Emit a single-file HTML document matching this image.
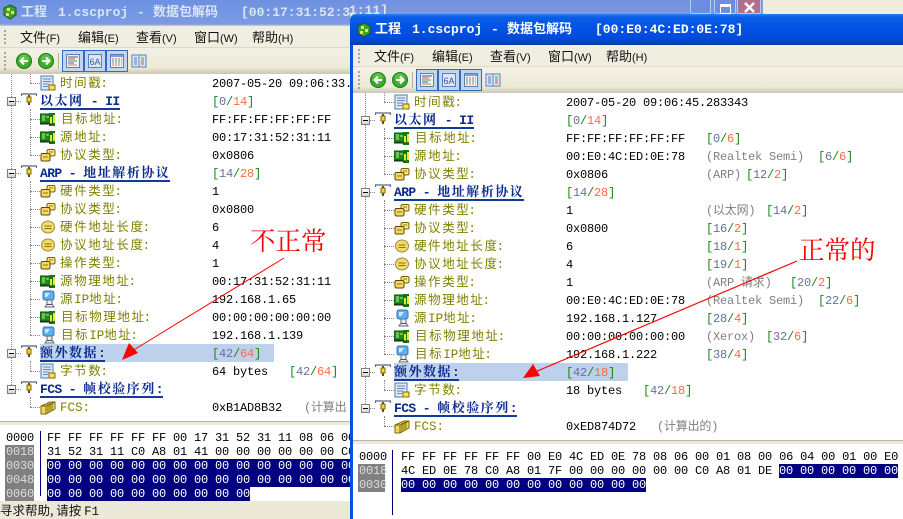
<!DOCTYPE html>
<html><head><meta charset="utf-8"><style>
html,body{margin:0;padding:0;width:903px;height:519px;overflow:hidden;background:#efecdb}
*{box-sizing:border-box}
.win{position:absolute;overflow:hidden;background:#fff}
.in{position:absolute}
.abs,.r,.r>*{position:absolute}
.title{left:-10px;width:1000px;height:26px;top:0}
.tt{position:absolute;top:4px;white-space:pre;font:bold 13px/18px "Liberation Mono","Noto Sans CJK SC",monospace}
.menu{left:-10px;width:1000px;height:22px;top:26px;background:#f0eee0;border-bottom:1px solid #ddd9c5}
.tb{left:-10px;width:1000px;height:26px;top:48px;background:linear-gradient(#f3f1e6,#ece9d8 20px,#cfcbb8 25px)}
.m{position:absolute;top:27px;font:13px/20px "Noto Sans CJK SC",sans-serif;color:#111;white-space:pre}
.m i{font:11px/20px "Liberation Sans",sans-serif;font-style:normal}
.grip{position:absolute;left:4px;width:2px;background:repeating-linear-gradient(#a9a792 0 2px,transparent 2px 4px)}
.btn{position:absolute;top:50px;width:22px;height:22px;background:#c6d5ee;border:1px solid #316ac5}
.r{left:0;height:18px;width:348px;font:12px/18px "Liberation Mono","Noto Sans CJK SC",monospace;white-space:pre}
.i{left:40px;top:1px;width:16px;height:16px}
.pc{left:40px;top:0;width:16px;height:18px}
.l{left:60px;top:-1px;color:#808000;font-family:"Noto Sans CJK SC",sans-serif;font-size:12.5px;letter-spacing:1.6px}
.l u{text-decoration:none;font-family:"Liberation Mono",monospace;letter-spacing:0;margin-left:-2px}
.v{left:212px;top:1px;color:#000;letter-spacing:-.2px}
.q{top:1px;color:#808080;letter-spacing:-.2px;font-family:"Liberation Mono","Noto Sans CJK SC",monospace}
.g{top:1px;color:#118811;letter-spacing:-.2px}
.g s{text-decoration:none;color:#667099}.g em{font-style:normal;color:#ff6a44}
.h{left:40px;top:0;height:18px;font:bold 13px/16px "Liberation Mono","Noto Serif CJK SC",serif;color:#0a2a90;border-bottom:2px solid #103a9c;white-space:pre;letter-spacing:-.6px}
.h b{letter-spacing:1.5px;font-family:"Noto Serif CJK SC",serif;font-weight:bold}
.c::before{content:"";position:absolute;left:30px;top:9px;width:10px;border-top:1px dotted #888}
.box{left:7px;top:5px;width:9px;height:9px;border:1px solid #808080;background:linear-gradient(#fff,#d8d4c4)}
.box::after{content:"";position:absolute;left:1px;top:3px;width:5px;height:1px;background:#000}
.dl{position:absolute;border-left:1px dotted #888;width:0}
.dh{left:16px;top:9px;width:5px;border-top:1px dotted #888}
.ic{left:21px;top:1px;width:16px;height:16px}
.split{left:-1px;width:1000px;height:5px;top:421px;background:#ece9d8;border-top:1px solid #b9b5a0;border-bottom:1px solid #fff}
.hx{position:absolute;left:47px;height:14px;font:12px/15px "Liberation Mono",monospace;white-space:pre;letter-spacing:-.2px;color:#000}
.gut{position:absolute;height:14px;width:29px;left:5px;font:12px/15px "Liberation Mono",monospace;letter-spacing:-.2px;padding-left:1px;color:#000}
.gut.s{background:#808080;color:#dcdcdc}
.sel{position:absolute;background:#000080}
.hx.w{color:#fff}
.vl{position:absolute;width:1px;background:#000080}
.big{position:absolute;color:#ff0000;font:25.5px/28px "Noto Serif CJK SC",serif;white-space:pre}
.wb{position:absolute;top:0;height:14px;border:1px solid #bcc8ee;border-top:0;border-radius:0 0 2px 2px}
</style></head><body>
<svg width="0" height="0" style="position:absolute"><defs>
<symbol id="doc" viewBox="0 0 16 16"><rect x="1" y="1" width="12" height="14" fill="#dfe8f8" stroke="#5577aa"/><path d="M3 4h8M3 6.5h8M3 9h6M3 11.5h5" stroke="#6688bb"/><rect x="9" y="10" width="6" height="5" fill="#f8e060" stroke="#807000"/></symbol>
<symbol id="board" viewBox="0 0 16 16"><rect x="0" y="3" width="12" height="9" fill="#159018" stroke="#065006"/><path d="M2 5h3M2 7h3M2 9h3M7 5v2M9 5v2" stroke="#cfe8a0"/><rect x="9" y="2" width="6" height="13" fill="#0c7a10"/><rect x="10" y="6" width="2" height="7" fill="#f4e040"/><rect x="13" y="4" width="2" height="8" fill="#f4e040"/><path d="M0 13h12" stroke="#222"/></symbol>
<symbol id="cubes" viewBox="0 0 16 16"><rect x="7" y="2.5" width="8" height="6.5" rx="1.5" fill="#fbe67a" stroke="#76600a"/><rect x="1" y="6.5" width="9" height="7.5" rx="1.5" fill="#f6d860" stroke="#5a4a08"/><path d="M3 10h5M9 5h4" stroke="#907a10"/></symbol>
<symbol id="disc" viewBox="0 0 16 16"><ellipse cx="8" cy="8" rx="6.5" ry="6" fill="#f6da68" stroke="#9a8a40"/><path d="M4.5 7h7M4.5 9.5h7" stroke="#8a7410"/></symbol>
<symbol id="pc" viewBox="0 0 16 18"><rect x="3" y="1" width="11" height="9" rx="2" fill="#5db0f0" stroke="#3a70b0"/><path d="M5 3h5l-3 4H5z" fill="#c8ecff"/><path d="M7 10h5v4l2 3H5l2-3z" fill="#e8ecf4" stroke="#606878"/><rect x="7" y="14" width="5" height="1" fill="#555"/></symbol>
<symbol id="stack" viewBox="0 0 16 16"><path d="M1 7l9-4h5v7l-9 5H1z" fill="#f2d85c" stroke="#77660c"/><path d="M6 7v8M8 5v9M10 4v8M12 3v8M1 7h5l9-4" stroke="#77660c" fill="none"/></symbol>
<symbol id="net" viewBox="0 0 16 16"><path d="M.5 3V1h15v2" stroke="#55667a" stroke-width="1.2" fill="none"/><path d="M8 2v10" stroke="#222" stroke-width="1.6"/><rect x="6" y="4" width="4" height="5" fill="#f4d040" stroke="#806a00"/></symbol>
<symbol id="back" viewBox="0 0 16 16"><circle cx="8" cy="8" r="7.5" fill="#3cab2c" stroke="#1a7a14"/><circle cx="8" cy="6" r="5" fill="#70cf58" opacity=".6"/><path d="M12 8H5M8 4.5L4.5 8 8 11.5" stroke="#fff" stroke-width="2" fill="none"/></symbol>
<symbol id="fwd" viewBox="0 0 16 16"><circle cx="8" cy="8" r="7.5" fill="#3cab2c" stroke="#1a7a14"/><circle cx="8" cy="6" r="5" fill="#70cf58" opacity=".6"/><path d="M4 8h7M8 4.5L11.5 8 8 11.5" stroke="#fff" stroke-width="2" fill="none"/></symbol>
<symbol id="t1" viewBox="0 0 16 16"><rect x="1.5" y="1.5" width="13" height="13" fill="#eef3fb" stroke="#5c7fb4"/><path d="M3 4h10" stroke="#555"/><path d="M3 6h7" stroke="#c55"/><path d="M3 8h9" stroke="#4a4"/><path d="M3 10h6" stroke="#55c"/><path d="M3 12h9" stroke="#c84"/></symbol>
<symbol id="t2" viewBox="0 0 16 16"><rect x="1.5" y="1.5" width="13" height="13" fill="#dce8fa" stroke="#5c7fb4"/><text x="8" y="12" text-anchor="middle" font-family="Liberation Sans" font-size="9" fill="#3355a0">6A</text></symbol>
<symbol id="t3" viewBox="0 0 16 16"><rect x="1.5" y="1.5" width="13" height="13" fill="#eef3fb" stroke="#5c7fb4"/><rect x="2" y="2" width="12" height="2" fill="#7aa0d8"/><path d="M3 6h10" stroke="#c66" stroke-dasharray="2 1"/><path d="M3 8h10" stroke="#4a4" stroke-dasharray="2 1"/><path d="M3 10h10" stroke="#888" stroke-dasharray="2 1"/><path d="M3 12h10" stroke="#c84" stroke-dasharray="2 1"/></symbol>
<symbol id="t4" viewBox="0 0 16 16"><rect x="1" y="2" width="14" height="12" fill="#dce8fa" stroke="#5c7fb4"/><path d="M8 2v12" stroke="#5c7fb4"/><path d="M3 5h3M3 7h3M3 9h3M3 11h3" stroke="#5577bb"/><path d="M10 5h3M10 7h3" stroke="#4a4"/><path d="M10 9h3M10 11h3" stroke="#c55"/></symbol>
<symbol id="app" viewBox="0 0 16 16"><path d="M8 1l6 3v7l-6 4-6-4V4z" fill="#3da030" stroke="#1a5a14"/><path d="M5 4h3v3H5zM9 7h3v3H9zM4 9h3v3H4z" fill="#e8e060"/></symbol>
</defs></svg>

<!-- LEFT WINDOW -->
<div class="win" style="left:0;top:0;width:350px;height:519px">
<div class="in" style="left:0;top:0;width:350px;height:519px">
<div class="abs title" style="background:linear-gradient(#6d90e0,#7497e4 14px,#7e9ae0 24px,#c7cfe0 26px)"></div>
<svg class="abs" style="left:2px;top:4px;width:16px;height:16px"><use href="#app"/></svg>
<div class="tt" style="left:21px;color:#dbe4f4">工程</div>
<div class="tt" style="left:58px;color:#dbe4f4">1.cscproj</div>
<div class="tt" style="left:137px;color:#dbe4f4">-</div>
<div class="tt" style="left:153px;color:#dbe4f4">数据包解码</div>
<div class="tt" style="left:241px;color:#dbe4f4">[00:17:31:52:31:11]</div>
<div class="abs menu"></div>
<div class="grip" style="top:30px;height:16px"></div>
<div class="m" style="left:20px">文件<i>(F)</i></div>
<div class="m" style="left:78px">编辑<i>(E)</i></div>
<div class="m" style="left:136px">查看<i>(V)</i></div>
<div class="m" style="left:194px">窗口<i>(W)</i></div>
<div class="m" style="left:252px">帮助<i>(H)</i></div>
<div class="abs tb"></div>
<div class="grip" style="top:52px;height:18px"></div>
<svg class="abs" style="left:16px;top:53px;width:16px;height:16px"><use href="#back"/></svg>
<svg class="abs" style="left:38px;top:53px;width:16px;height:16px"><use href="#fwd"/></svg>
<div class="abs" style="left:58px;top:53px;width:1px;height:16px;background:#b4b19e"></div>
<div class="btn" style="left:62px"><svg class="abs" style="left:2px;top:2px;width:16px;height:16px"><use href="#t1"/></svg></div>
<div class="btn" style="left:84px"><svg class="abs" style="left:2px;top:2px;width:16px;height:16px"><use href="#t2"/></svg></div>
<div class="btn" style="left:106px"><svg class="abs" style="left:2px;top:2px;width:16px;height:16px"><use href="#t3"/></svg></div>
<svg class="abs" style="left:131px;top:53px;width:16px;height:16px"><use href="#t4"/></svg>

<div class="dl" style="left:11px;top:74px;height:315px"></div>
<div class="dl" style="left:30px;top:74px;height:9px"></div>
<div class="dl" style="left:30px;top:109px;height:46px"></div>
<div class="dl" style="left:30px;top:181px;height:154px"></div>
<div class="dl" style="left:30px;top:361px;height:10px"></div>
<div class="dl" style="left:30px;top:397px;height:10px"></div>

<div class="r c" style="top:74px"><svg class="i"><use href="#doc"/></svg><span class="l">时间戳<u>:</u></span><span class="v">2007-05-20 09:06:33.</span></div>
<div class="r" style="top:92px"><span class="box"></span><span class="dh"></span><svg class="ic"><use href="#net"/></svg><span class="h"><b>以太网</b> - II</span><span class="g" style="left:212px">[<s>0</s>/<em>14</em>]</span></div>
<div class="r c" style="top:110px"><svg class="i"><use href="#board"/></svg><span class="l" style="left:61px">目标地址<u>:</u></span><span class="v">FF:FF:FF:FF:FF:FF</span></div>
<div class="r c" style="top:128px"><svg class="i"><use href="#board"/></svg><span class="l">源地址<u>:</u></span><span class="v">00:17:31:52:31:11</span></div>
<div class="r c" style="top:146px"><svg class="i"><use href="#cubes"/></svg><span class="l">协议类型<u>:</u></span><span class="v">0x0806</span></div>
<div class="r" style="top:164px"><span class="box"></span><span class="dh"></span><svg class="ic"><use href="#net"/></svg><span class="h">ARP - <b>地址解析协议</b></span><span class="g" style="left:212px">[<s>14</s>/<em>28</em>]</span></div>
<div class="r c" style="top:182px"><svg class="i"><use href="#cubes"/></svg><span class="l">硬件类型<u>:</u></span><span class="v">1</span></div>
<div class="r c" style="top:200px"><svg class="i"><use href="#cubes"/></svg><span class="l">协议类型<u>:</u></span><span class="v">0x0800</span></div>
<div class="r c" style="top:218px"><svg class="i"><use href="#disc"/></svg><span class="l">硬件地址长度<u>:</u></span><span class="v">6</span></div>
<div class="r c" style="top:236px"><svg class="i"><use href="#disc"/></svg><span class="l">协议地址长度<u>:</u></span><span class="v">4</span></div>
<div class="r c" style="top:254px"><svg class="i"><use href="#cubes"/></svg><span class="l">操作类型<u>:</u></span><span class="v">1</span></div>
<div class="r c" style="top:272px"><svg class="i"><use href="#board"/></svg><span class="l">源物理地址<u>:</u></span><span class="v">00:17:31:52:31:11</span></div>
<div class="r c" style="top:290px"><svg class="pc"><use href="#pc"/></svg><span class="l">源<u style="margin:0">IP</u>地址<u>:</u></span><span class="v">192.168.1.65</span></div>
<div class="r c" style="top:308px"><svg class="i"><use href="#board"/></svg><span class="l" style="left:61px">目标物理地址<u>:</u></span><span class="v">00:00:00:00:00:00</span></div>
<div class="r c" style="top:326px"><svg class="pc"><use href="#pc"/></svg><span class="l" style="left:61px">目标<u style="margin:0">IP</u>地址<u>:</u></span><span class="v">192.168.1.139</span></div>
<div style="position:absolute;left:40px;top:344px;width:234px;height:18px;background:#bdd0ec"></div>
<div class="r" style="top:344px"><span class="box"></span><span class="dh"></span><svg class="ic"><use href="#net"/></svg><span class="h"><b>额外数据</b>:</span><span class="g" style="left:212px">[<s>42</s>/<em>64</em>]</span></div>
<div class="r c" style="top:362px"><svg class="i"><use href="#doc"/></svg><span class="l">字节数<u>:</u></span><span class="v">64 bytes</span><span class="g" style="left:289px">[<s>42</s>/<em>64</em>]</span></div>
<div class="r" style="top:380px"><span class="box"></span><span class="dh"></span><svg class="ic"><use href="#net"/></svg><span class="h">FCS - <b>帧校验序列</b>:</span></div>
<div class="r c" style="top:398px"><svg class="i"><use href="#stack"/></svg><span class="l"><u style="margin:0">FCS:</u></span><span class="v">0xB1AD8B32</span><span class="q" style="left:304px">(计算出</span></div>

<div class="abs split" style="left:-10px"></div>
<div class="vl" style="left:40px;top:431px;height:65px"></div>
<div class="gut" style="top:431px">0000</div>
<div class="gut s" style="top:445px">0018</div>
<div class="gut s" style="top:459px">0030</div>
<div class="gut s" style="top:473px">0048</div>
<div class="gut s" style="top:487px">0060</div>
<div class="hx" style="top:431px">FF FF FF FF FF FF 00 17 31 52 31 11 08 06 00</div>
<div class="hx" style="top:445px">31 52 31 11 C0 A8 01 41 00 00 00 00 00 00 C0</div>
<div class="sel" style="left:47px;top:459px;width:303px;height:28px"></div>
<div class="sel" style="left:47px;top:487px;width:203px;height:14px"></div>
<div class="hx w" style="top:459px">00 00 00 00 00 00 00 00 00 00 00 00 00 00 00</div>
<div class="hx w" style="top:473px">00 00 00 00 00 00 00 00 00 00 00 00 00 00 00</div>
<div class="hx w" style="top:487px">00 00 00 00 00 00 00 00 00 00 00</div>
<div style="position:absolute;left:0;top:501px;width:350px;height:18px;background:#ece9d8;font:12.5px/18px 'Noto Sans CJK SC',sans-serif;color:#111;white-space:pre">寻求帮助, 请按 <span style="font-family:'Liberation Mono',monospace">F1</span></div>
</div></div>

<!-- left window visible top strip -->
<div style="position:absolute;left:350px;top:0;width:413px;height:14px;overflow:hidden;background:linear-gradient(#6d90e0,#7b99e2);border-right:1px solid #8a9bd8">
<div style="position:absolute;left:-1px;top:2px;font:bold 13px/18px 'Liberation Mono',monospace;color:#dbe4f4">1:11]</div>
</div>
<div class="wb" style="left:690px;width:21px;background:#6d8ee0"></div>
<div class="wb" style="left:714px;width:22px;background:#6d8ee0"><div style="position:absolute;left:5px;top:4px;width:11px;height:10px;border:1px solid #fff;border-top-width:3px"></div></div>
<div class="wb" style="left:737px;width:24px;background:#b26f8c"><svg style="position:absolute;left:5px;top:1px;width:13px;height:13px"><path d="M2 2l9 9M11 2l-9 9" stroke="#fff" stroke-width="2.4"/></svg></div>

<!-- RIGHT WINDOW -->
<div class="win" style="left:350px;top:14px;width:553px;height:505px;border-radius:6px 0 0 0;background:#0a50e0">
<div style="position:absolute;left:3px;top:30px;width:550px;height:475px;background:#fff"></div>
<div class="in" style="left:4px;top:-19px;width:549px;height:524px">
<div class="abs title" style="top:19px;height:31px;background:linear-gradient(#2a80f0,#0a5ee8 3px,#0456e6 10px,#0048da 26px,#0a3cae 30px)"></div>
<svg class="abs" style="left:2px;top:27px;width:16px;height:16px"><use href="#app"/></svg>
<div class="tt" style="left:21px;top:26px;color:#fff">工程</div>
<div class="tt" style="left:58px;top:26px;color:#fff">1.cscproj</div>
<div class="tt" style="left:137px;top:26px;color:#fff">-</div>
<div class="tt" style="left:153px;top:26px;color:#fff">数据包解码</div>
<div class="tt" style="left:241px;top:26px;color:#fff">[00:E0:4C:ED:0E:78]</div>

<div class="abs menu" style="top:50px;left:-1px"></div>
<div class="grip" style="top:54px;height:16px"></div>
<div class="m" style="left:20px;top:51px">文件<i>(F)</i></div>
<div class="m" style="left:78px;top:51px">编辑<i>(E)</i></div>
<div class="m" style="left:136px;top:51px">查看<i>(V)</i></div>
<div class="m" style="left:194px;top:51px">窗口<i>(W)</i></div>
<div class="m" style="left:252px;top:51px">帮助<i>(H)</i></div>
<div class="abs tb" style="top:72px;left:-1px"></div>
<div class="grip" style="top:76px;height:18px"></div>
<svg class="abs" style="left:16px;top:77px;width:16px;height:16px"><use href="#back"/></svg>
<svg class="abs" style="left:38px;top:77px;width:16px;height:16px"><use href="#fwd"/></svg>
<div class="abs" style="left:58px;top:77px;width:1px;height:16px;background:#b4b19e"></div>
<div class="btn" style="left:62px;top:74px"><svg class="abs" style="left:2px;top:2px;width:16px;height:16px"><use href="#t1"/></svg></div>
<div class="btn" style="left:84px;top:74px"><svg class="abs" style="left:2px;top:2px;width:16px;height:16px"><use href="#t2"/></svg></div>
<div class="btn" style="left:106px;top:74px"><svg class="abs" style="left:2px;top:2px;width:16px;height:16px"><use href="#t3"/></svg></div>
<svg class="abs" style="left:131px;top:77px;width:16px;height:16px"><use href="#t4"/></svg>

<div class="in" style="left:0;top:24px;width:549px;height:500px">
<div class="dl" style="left:11px;top:74px;height:315px"></div>
<div class="dl" style="left:30px;top:74px;height:9px"></div>
<div class="dl" style="left:30px;top:109px;height:46px"></div>
<div class="dl" style="left:30px;top:181px;height:154px"></div>
<div class="dl" style="left:30px;top:361px;height:10px"></div>
<div class="dl" style="left:30px;top:397px;height:10px"></div>

<div class="r c" style="top:74px;width:549px"><svg class="i"><use href="#doc"/></svg><span class="l">时间戳<u>:</u></span><span class="v">2007-05-20 09:06:45.283343</span></div>
<div class="r" style="top:92px;width:549px"><span class="box"></span><span class="dh"></span><svg class="ic"><use href="#net"/></svg><span class="h"><b>以太网</b> - II</span><span class="g" style="left:212px">[<s>0</s>/<em>14</em>]</span></div>
<div class="r c" style="top:110px;width:549px"><svg class="i"><use href="#board"/></svg><span class="l" style="left:61px">目标地址<u>:</u></span><span class="v">FF:FF:FF:FF:FF:FF</span><span class="g" style="left:352px">[<s>0</s>/<em>6</em>]</span></div>
<div class="r c" style="top:128px;width:549px"><svg class="i"><use href="#board"/></svg><span class="l">源地址<u>:</u></span><span class="v">00:E0:4C:ED:0E:78</span><span class="q" style="left:352px">(Realtek Semi)</span><span class="g" style="left:464px">[<s>6</s>/<em>6</em>]</span></div>
<div class="r c" style="top:146px;width:549px"><svg class="i"><use href="#cubes"/></svg><span class="l">协议类型<u>:</u></span><span class="v">0x0806</span><span class="q" style="left:352px">(ARP)</span><span class="g" style="left:392px">[<s>12</s>/<em>2</em>]</span></div>
<div class="r" style="top:164px;width:549px"><span class="box"></span><span class="dh"></span><svg class="ic"><use href="#net"/></svg><span class="h">ARP - <b>地址解析协议</b></span><span class="g" style="left:212px">[<s>14</s>/<em>28</em>]</span></div>
<div class="r c" style="top:182px;width:549px"><svg class="i"><use href="#cubes"/></svg><span class="l">硬件类型<u>:</u></span><span class="v">1</span><span class="q" style="left:352px">(以太网)</span><span class="g" style="left:412px">[<s>14</s>/<em>2</em>]</span></div>
<div class="r c" style="top:200px;width:549px"><svg class="i"><use href="#cubes"/></svg><span class="l">协议类型<u>:</u></span><span class="v">0x0800</span><span class="g" style="left:352px">[<s>16</s>/<em>2</em>]</span></div>
<div class="r c" style="top:218px;width:549px"><svg class="i"><use href="#disc"/></svg><span class="l">硬件地址长度<u>:</u></span><span class="v">6</span><span class="g" style="left:352px">[<s>18</s>/<em>1</em>]</span></div>
<div class="r c" style="top:236px;width:549px"><svg class="i"><use href="#disc"/></svg><span class="l">协议地址长度<u>:</u></span><span class="v">4</span><span class="g" style="left:352px">[<s>19</s>/<em>1</em>]</span></div>
<div class="r c" style="top:254px;width:549px"><svg class="i"><use href="#cubes"/></svg><span class="l">操作类型<u>:</u></span><span class="v">1</span><span class="q" style="left:352px">(ARP 请求)</span><span class="g" style="left:436px">[<s>20</s>/<em>2</em>]</span></div>
<div class="r c" style="top:272px;width:549px"><svg class="i"><use href="#board"/></svg><span class="l">源物理地址<u>:</u></span><span class="v">00:E0:4C:ED:0E:78</span><span class="q" style="left:352px">(Realtek Semi)</span><span class="g" style="left:464px">[<s>22</s>/<em>6</em>]</span></div>
<div class="r c" style="top:290px;width:549px"><svg class="pc"><use href="#pc"/></svg><span class="l">源<u style="margin:0">IP</u>地址<u>:</u></span><span class="v">192.168.1.127</span><span class="g" style="left:352px">[<s>28</s>/<em>4</em>]</span></div>
<div class="r c" style="top:308px;width:549px"><svg class="i"><use href="#board"/></svg><span class="l" style="left:61px">目标物理地址<u>:</u></span><span class="v">00:00:00:00:00:00</span><span class="q" style="left:352px">(Xerox)</span><span class="g" style="left:412px">[<s>32</s>/<em>6</em>]</span></div>
<div class="r c" style="top:326px;width:549px"><svg class="pc"><use href="#pc"/></svg><span class="l" style="left:61px">目标<u style="margin:0">IP</u>地址<u>:</u></span><span class="v">192.168.1.222</span><span class="g" style="left:352px">[<s>38</s>/<em>4</em>]</span></div>
<div style="position:absolute;left:40px;top:344px;width:234px;height:18px;background:#bdd0ec"></div>
<div class="r" style="top:344px;width:549px"><span class="box"></span><span class="dh"></span><svg class="ic"><use href="#net"/></svg><span class="h"><b>额外数据</b>:</span><span class="g" style="left:212px">[<s>42</s>/<em>18</em>]</span></div>
<div class="r c" style="top:362px;width:549px"><svg class="i"><use href="#doc"/></svg><span class="l">字节数<u>:</u></span><span class="v">18 bytes</span><span class="g" style="left:289px">[<s>42</s>/<em>18</em>]</span></div>
<div class="r" style="top:380px;width:549px"><span class="box"></span><span class="dh"></span><svg class="ic"><use href="#net"/></svg><span class="h">FCS - <b>帧校验序列</b>:</span></div>
<div class="r c" style="top:398px;width:549px"><svg class="i"><use href="#stack"/></svg><span class="l"><u style="margin:0">FCS:</u></span><span class="v">0xED874D72</span><span class="q" style="left:303px">(计算出的)</span></div>

<div class="abs split"></div>
<div class="vl" style="left:38px;top:431px;height:65px"></div>
<div class="gut" style="top:431px;left:4px;width:27px">0000</div>
<div class="gut s" style="top:445px;left:4px;width:27px">0018</div>
<div class="gut s" style="top:459px;left:4px;width:27px">0030</div>
<div class="sel" style="left:425px;top:445px;width:119px;height:14px"></div>
<div class="sel" style="left:47px;top:459px;width:245px;height:14px"></div>
<div class="hx" style="top:431px">FF FF FF FF FF FF 00 E0 4C ED 0E 78 08 06 00 01 08 00 06 04 00 01 00 E0</div>
<div class="hx" style="top:445px">4C ED 0E 78 C0 A8 01 7F 00 00 00 00 00 00 C0 A8 01 DE</div>
<div class="hx w" style="top:445px;left:425px">00 00 00 00 00 00</div>
<div class="hx w" style="top:459px">00 00 00 00 00 00 00 00 00 00 00 00</div>
</div>
</div></div>

<div class="big" style="left:250px;top:226px">不正常</div>
<div class="big" style="left:799px;top:235px">正常的</div>
<svg style="position:absolute;left:0;top:0" width="903" height="519">
<path d="M284 258L132 351" stroke="#f00" stroke-width="1" fill="none"/>
<path d="M122 360L129 343L138 353z" fill="#f00"/>
<path d="M797 261L535 372" stroke="#f00" stroke-width="1.2" fill="none"/>
<path d="M523 378L533 364L540 376z" fill="#f00"/>
</svg>
</body></html>
